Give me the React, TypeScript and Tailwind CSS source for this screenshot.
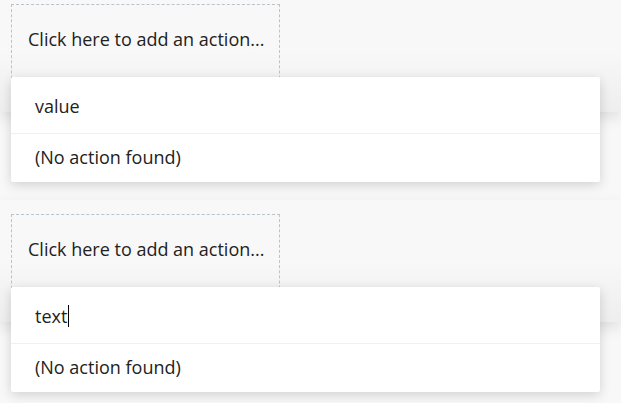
type Props = {
  query: string;
  caret?: boolean;
};

function ActionPicker({ query, caret }: Props) {
  return (
    <div className="relative h-[210px] pt-[4px]">
      <div className="absolute left-0 right-0 top-[-10px] h-[122px] bg-gradient-to-b from-[#f8f8f8] from-50% to-[#eeeeee] shadow-[0_6px_14px_rgba(0,0,0,0.10)]" />
      <div className="relative ml-[11px] h-[90px] w-[269px] border border-dashed border-[#b9c3ca] pl-[16px] pt-[21px] text-[18px] leading-[27px] text-[#222]">
        Click here to add an action...
      </div>
      <div className="absolute left-[11px] top-[77px] w-[589px] rounded-[2px] bg-white text-[18px] text-[#222] shadow-[0_3px_12px_rgba(0,0,0,0.16)]">
        <div className="flex h-[57px] items-center border-b border-[#f0f0f0] pl-[24px] pt-[2px]">
          <span>{query}</span>
          {caret && <span className="ml-[1px] inline-block h-[22px] w-px bg-black" />}
        </div>
        <div className="flex h-[48px] items-center pl-[24px] pb-[2px]">(No action found)</div>
      </div>
    </div>
  );
}

export default function App() {
  return (
    <div
      className="h-[403px] w-[621px] overflow-hidden bg-[#f8f8f8]"
      style={{ fontFamily: '"Open Sans", "Noto Sans", sans-serif' }}
    >
      <ActionPicker query="value" />
      <ActionPicker query="text" caret />
    </div>
  );
}
